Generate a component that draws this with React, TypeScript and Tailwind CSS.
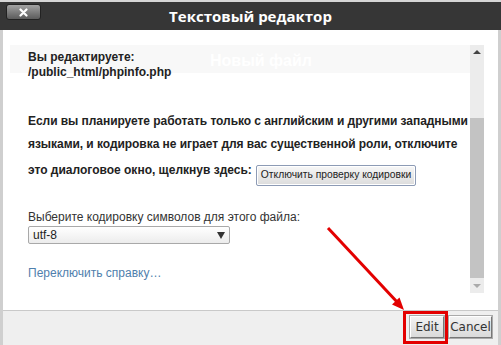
function TitleBar() {
  return (
    <div className="h-[30px] border-t-2 border-[#d6d6d6] bg-[#363636] relative flex items-center justify-center">
      <div className="absolute left-[6px] top-[2px] w-[35px] h-[16px] rounded-[3px] border border-[#222] bg-gradient-to-b from-[#a3a3a3] to-[#5c5c5c] flex items-center justify-center">
        <svg width="9" height="9" viewBox="0 0 9 9">
          <path d="M1.5 1.5 L7.5 7.5 M7.5 1.5 L1.5 7.5" stroke="#fff" strokeWidth="2.2" strokeLinecap="round" />
        </svg>
      </div>
      <h1 className="text-white text-[15px] font-bold font-['Open_Sans',sans-serif] leading-none">Текстовый редактор</h1>
    </div>
  )
}

function Scrollbar() {
  return (
    <div className="shrink-0 w-[14px] mt-[15px] mb-[17px] bg-[#ececec] flex flex-col items-center">
      <div className="h-[14px] flex items-center justify-center">
        <div className="w-0 h-0 border-x-[4px] border-x-transparent border-b-[4px] border-b-[#444]" />
      </div>
      <div className="h-[59px]" />
      <div className="w-[14px] h-[160px] bg-[#c3c3c3]" />
      <div className="flex-1 flex items-center justify-center">
        <div className="w-0 h-0 border-x-[4px] border-x-transparent border-t-[4px] border-t-[#aaa]" />
      </div>
    </div>
  )
}

function Content() {
  return (
    <div className="flex-1 min-w-0 pl-[25px] text-[12px] text-[#222] relative">
      <div className="absolute left-[7px] right-0 top-[15px] h-[28px] bg-[#f8f8f8]">
        <span className="absolute left-[200px] top-[4px] text-white text-[16px] font-bold">Новый файл</span>
      </div>

      <div className="relative pt-[20px] font-bold leading-[15px]">
        <p>Вы редактируете:</p>
        <p>/public_html/phpinfo.php</p>
      </div>

      <p className="mt-[30px] font-bold leading-[23px] whitespace-nowrap tracking-[-0.05px]">
        Если вы планируете работать только с английским и другими западными
        <br />
        языками, и кодировка не играет для вас существенной роли, отключите
      </p>

      <div className="flex items-start gap-[4px] h-[26px] mt-[4px]">
        <span className="font-bold leading-[20px]">это диалоговое окно, щелкнув здесь:</span>
        <button className="mt-[5px] h-[21px] px-[4px] border border-[#8d9bb5] rounded-[2px] bg-gradient-to-b from-[#f7f7f7] to-[#dcdcdc] text-[10.3px] text-[#222] leading-none shadow-[inset_0_0_0_1px_#fff]">
          Отключить проверку кодировки
        </button>
      </div>

      <p className="mt-[23px] leading-[16px] text-[#333]">Выберите кодировку символов для этого файла:</p>

      <div className="mt-[1px] w-[202px] h-[18px] border border-[#a9a9a9] rounded-[2px] bg-gradient-to-b from-white to-[#ececec] flex items-center justify-between px-[4px]">
        <span className="text-[12px] text-[#222] leading-none">utf-8</span>
        <div className="w-0 h-0 border-x-[4px] border-x-transparent border-t-[7px] border-t-[#333]" />
      </div>

      <p className="mt-[21px] leading-[16px] text-[#4f80ad]">Переключить справку…</p>
    </div>
  )
}

function Footer() {
  return (
    <div className="h-[35px] border-t border-[#c9c9c9] bg-[#efefef] flex justify-end items-start gap-[5px] pr-[6px] pt-[5px] font-['DejaVu_Sans',sans-serif] text-[12px] text-[#333]">
      <button className="h-[22px] w-[34px] bg-gradient-to-b from-[#f2f2f2] to-[#dadada] border border-t-[#fff] border-l-[#fff] border-r-[#777] border-b-[#777] shadow-[0_0_0_1px_#aaa] leading-none">
        Edit
      </button>
      <button className="h-[22px] w-[43px] bg-gradient-to-b from-[#f2f2f2] to-[#dadada] border border-t-[#fff] border-l-[#fff] border-r-[#777] border-b-[#777] shadow-[0_0_0_1px_#aaa] leading-none">
        Cancel
      </button>
    </div>
  )
}

export default function App() {
  return (
    <div className="w-[501px] h-[345px] bg-white relative overflow-hidden font-['Liberation_Sans',Arial,sans-serif]">
      <TitleBar />
      <div className="border-x-[3px] border-[#cfcfcf]">
        <div className="h-[280px] flex pr-[14px]">
          <Content />
          <Scrollbar />
        </div>
        <Footer />
      </div>

      <div className="absolute left-[403px] top-[311px] w-[45px] h-[33px] border-[3px] border-[#e30000]" />
      <svg className="absolute inset-0 pointer-events-none" width="501" height="345">
        <line x1="328" y1="228" x2="398" y2="303" stroke="#e30000" strokeWidth="3" />
        <polygon points="404,310 392,304.5 399.5,297.5" fill="#e30000" />
      </svg>
    </div>
  )
}
